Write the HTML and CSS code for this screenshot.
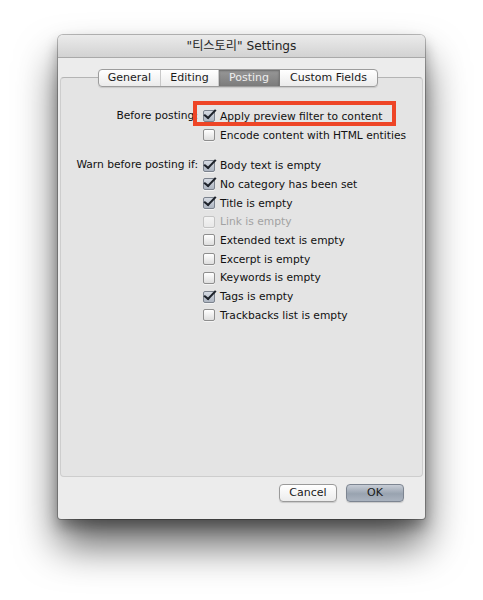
FILE: index.html
```html
<!DOCTYPE html>
<html>
<head>
<meta charset="utf-8">
<link rel="stylesheet" href="styles.css">
</head>
<body>
<div class="desk">
  <div class="window">
    <div class="titlebar">"티스토리" Settings</div>
    <div class="content">
      <div class="tabs">
        <div class="tab t-general">General</div>
        <div class="tab t-editing">Editing</div>
        <div class="tab t-posting selected">Posting</div>
        <div class="tab t-custom">Custom Fields</div>
      </div>
      <div class="group">
        <div class="form">
          <div class="label">Before posting:</div>
          <div class="options">
            <div class="opt"><span class="cb checked"></span><span>Apply preview filter to content</span><span class="redbox"></span></div>
            <div class="opt"><span class="cb"></span><span>Encode content with HTML entities</span></div>
          </div>
          <div class="label">Warn before posting if:</div>
          <div class="options">
            <div class="opt"><span class="cb checked"></span><span>Body text is empty</span></div>
            <div class="opt"><span class="cb checked"></span><span>No category has been set</span></div>
            <div class="opt"><span class="cb checked"></span><span>Title is empty</span></div>
            <div class="opt disabled"><span class="cb"></span><span>Link is empty</span></div>
            <div class="opt"><span class="cb"></span><span>Extended text is empty</span></div>
            <div class="opt"><span class="cb"></span><span>Excerpt is empty</span></div>
            <div class="opt"><span class="cb"></span><span>Keywords is empty</span></div>
            <div class="opt"><span class="cb checked"></span><span>Tags is empty</span></div>
            <div class="opt"><span class="cb"></span><span>Trackbacks list is empty</span></div>
          </div>
        </div>
      </div>
      <div class="buttons">
        <div class="btn cancel">Cancel</div>
        <div class="btn ok">OK</div>
      </div>
    </div>
  </div>
</div>
</body>
</html>
```
FILE: styles.css
```css
html, body {
  margin: 0;
  padding: 0;
  background: #ffffff;
}
body {
  font-family: "DejaVu Sans", "Noto Sans CJK KR", sans-serif;
  font-size: 10.7px;
  color: #111111;
}
.desk {
  padding: 35px 0 0 58px;
  height: 565px;
}
.window {
  width: 367px;
  height: 484px;
  display: flex;
  flex-direction: column;
  background: #ececec;
  border-radius: 5px 5px 3px 3px;
  box-shadow: 0 0 0 1px rgba(0,0,0,0.25), 0 26px 40px rgba(0,0,0,0.62), 0 8px 14px rgba(0,0,0,0.3);
  overflow: hidden;
}
.titlebar {
  height: 22px;
  line-height: 23px;
  text-align: center;
  font-size: 12.2px;
  color: #262626;
  background: linear-gradient(#ebebeb, #d2d2d2);
  border-bottom: 1px solid #a9a9a9;
}
.content {
  flex: 1;
  display: flex;
  flex-direction: column;
  padding: 11px 2px 0 2px;
}
.tabs {
  align-self: center;
  display: flex;
  height: 16px;
  border: 1px solid #9c9c9c;
  border-radius: 4px;
  background: linear-gradient(#ffffff, #ebebeb);
  box-shadow: 0 1px 1px rgba(0,0,0,0.12);
  position: relative;
  z-index: 1;
  margin-right: 7px;
  overflow: hidden;
}
.tab {
  line-height: 16px;
  text-align: center;
  font-size: 11px;
  color: #1a1a1a;
  border-right: 1px solid #c8c8c8;
}
.tab:last-child { border-right: none; }
.t-general { width: 61px; }
.t-editing { width: 57px; }
.t-posting { width: 60px; }
.t-custom { width: 97px; }
.tab.selected {
  background: linear-gradient(#989898, #7c7c7c);
  color: #eeeeee;
  border-right-color: #777;
  box-shadow: inset 0 1px 2px rgba(0,0,0,0.3);
}
.group {
  height: 400px;
  margin-top: -10px;
  background: #e4e4e4;
  border: 1px solid #cdcdcd;
  border-top-color: #b4b4b4;
  border-radius: 4px;
  box-sizing: border-box;
  padding-top: 29px;
}
.form {
  display: grid;
  grid-template-columns: 137px 1fr;
  column-gap: 5px;
  row-gap: 12px;
}
.label {
  text-align: right;
  line-height: 18.7px;
  white-space: nowrap;
}
.options {
  display: flex;
  flex-direction: column;
}
.opt {
  display: flex;
  align-items: center;
  height: 18.7px;
  gap: 5px;
  white-space: nowrap;
  position: relative;
}
.cb {
  width: 10px;
  height: 10px;
  border: 1px solid #8e8e8e;
  border-radius: 2px;
  background: linear-gradient(#ffffff, #dedede);
  box-shadow: 0 1px 0 rgba(255,255,255,0.6);
  position: relative;
  flex: none;
}
.cb.checked {
  background: linear-gradient(#d6dbe3, #aeb6c2);
  border-color: #7c838e;
}
.cb.checked::after {
  content: "";
  position: absolute;
  left: 3px;
  top: -4px;
  width: 4px;
  height: 10px;
  border-right: 2.4px solid #1e232b;
  border-bottom: 2.4px solid #1e232b;
  transform: rotate(38deg) skewX(-6deg);
  transform-origin: 50% 50%;
}
.opt.disabled { color: #a2a2a2; }
.opt.disabled .cb {
  border-color: #c4c4c4;
  background: linear-gradient(#f4f4f4, #e8e8e8);
}
.redbox {
  position: absolute;
  left: -10px;
  top: -6px;
  width: 195px;
  height: 17px;
  border: 4px solid #ee4526;
  pointer-events: none;
}
.buttons {
  display: flex;
  justify-content: flex-end;
  gap: 9px;
  padding: 7px 19px 0 0;
}
.btn {
  width: 56px;
  height: 16px;
  line-height: 16px;
  text-align: center;
  font-size: 11px;
  border: 1px solid #9a9a9a;
  border-radius: 4px;
  color: #1a1a1a;
  box-shadow: 0 1px 1px rgba(0,0,0,0.15);
}
.cancel {
  background: linear-gradient(#ffffff, #ececec);
}
.ok {
  background: linear-gradient(#c7cdd6, #99a3b0 55%, #aab3bf);
  border-color: #7d8591;
}
```
